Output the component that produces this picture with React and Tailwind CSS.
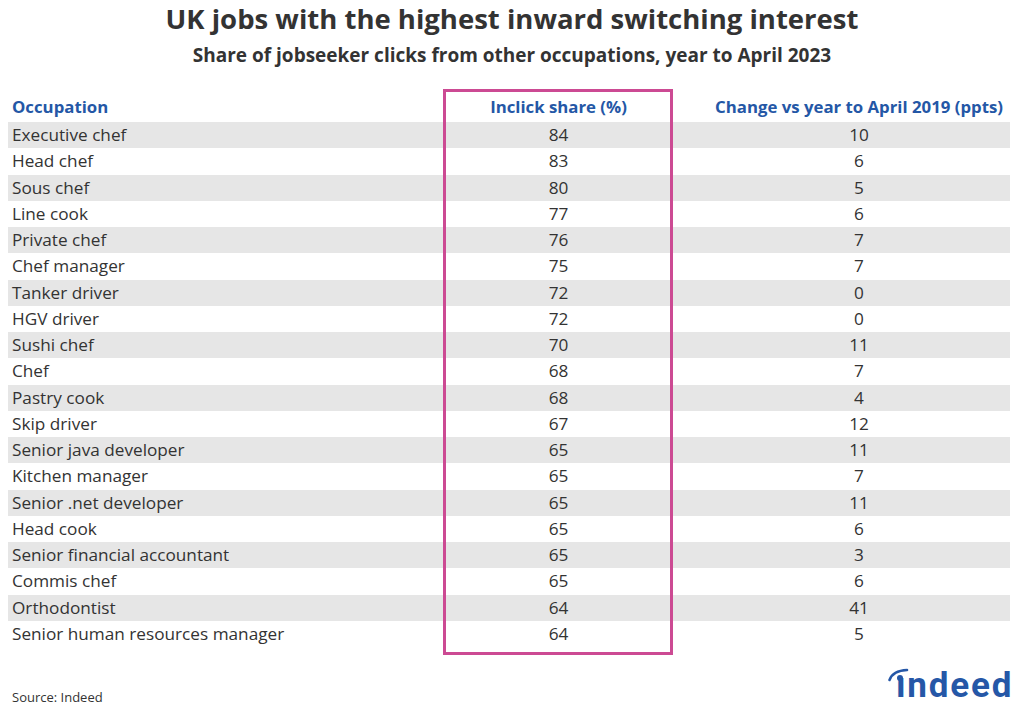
const rows = [
  ['Executive chef', 84, 10],
  ['Head chef', 83, 6],
  ['Sous chef', 80, 5],
  ['Line cook', 77, 6],
  ['Private chef', 76, 7],
  ['Chef manager', 75, 7],
  ['Tanker driver', 72, 0],
  ['HGV driver', 72, 0],
  ['Sushi chef', 70, 11],
  ['Chef', 68, 7],
  ['Pastry cook', 68, 4],
  ['Skip driver', 67, 12],
  ['Senior java developer', 65, 11],
  ['Kitchen manager', 65, 7],
  ['Senior .net developer', 65, 11],
  ['Head cook', 65, 6],
  ['Senior financial accountant', 65, 3],
  ['Commis chef', 65, 6],
  ['Orthodontist', 64, 41],
  ['Senior human resources manager', 64, 5],
];

const IndeedLogo = () => (
  <div className="relative w-[124px] h-[34px]">
    <span className="absolute left-[10px] top-[1px] text-[35px] leading-none font-bold tracking-[1.8px] text-[#2557a7] font-['Roboto',sans-serif]">
      ındeed
    </span>
    <svg className="absolute left-0 top-0" width="30" height="20" viewBox="0 0 30 20">
      <path d="M3.5 13 Q 7 3.5 21 3" fill="none" stroke="#2557a7" strokeWidth="2.6" strokeLinecap="round" />
      <circle cx="14" cy="11" r="3" fill="#2557a7" />
    </svg>
  </div>
);

export default function App() {
  return (
    <div className="w-[1024px] h-[711px] bg-white relative font-['Open_Sans',sans-serif] text-[#333]">
      <div className="pt-[2px] text-center">
        <h1 className="text-[27.5px] leading-[33px] font-bold text-[#333]">
          UK jobs with the highest inward switching interest
        </h1>
        <p className="mt-[8px] text-[19px] leading-[24px] font-bold text-[#333]">
          Share of jobseeker clicks from other occupations, year to April 2023
        </p>
      </div>

      <div className="relative mx-[8px] mt-[22px] w-[1002px] pt-[9px]">
        <div className="absolute left-[435px] top-0 w-[230px] h-[566px] border-[3px] border-[#cc4a93]"></div>
        <div className="grid grid-cols-[436px_229px_1fr] h-[24px] pb-[6px] leading-[18px] items-center text-[16.8px] font-bold text-[#2457a6]">
          <div className="pl-[4px]">Occupation</div>
          <div className="text-center">Inclick share (%)</div>
          <div className="text-center pl-[35px]">Change vs year to April 2019 (ppts)</div>
        </div>
        {rows.map(([name, share, change], i) => (
          <div
            key={name}
            className={`grid grid-cols-[436px_229px_1fr] h-[26.25px] items-center text-[17.2px] ${i % 2 === 0 ? 'bg-[#e6e6e6]' : 'bg-white'}`}
          >
            <div className="pl-[4px]">{name}</div>
            <div className="text-center">{share}</div>
            <div className="text-center pl-[35px]">{change}</div>
          </div>
        ))}
      </div>

      <div className="absolute left-0 right-0 bottom-0 flex items-end justify-between pl-[12px] pr-[14px] pb-[6px]">
        <span className="text-[13px] leading-[16px] text-[#333]">Source: Indeed</span>
        <div className="mb-[4px]">
          <IndeedLogo />
        </div>
      </div>
    </div>
  );
}
